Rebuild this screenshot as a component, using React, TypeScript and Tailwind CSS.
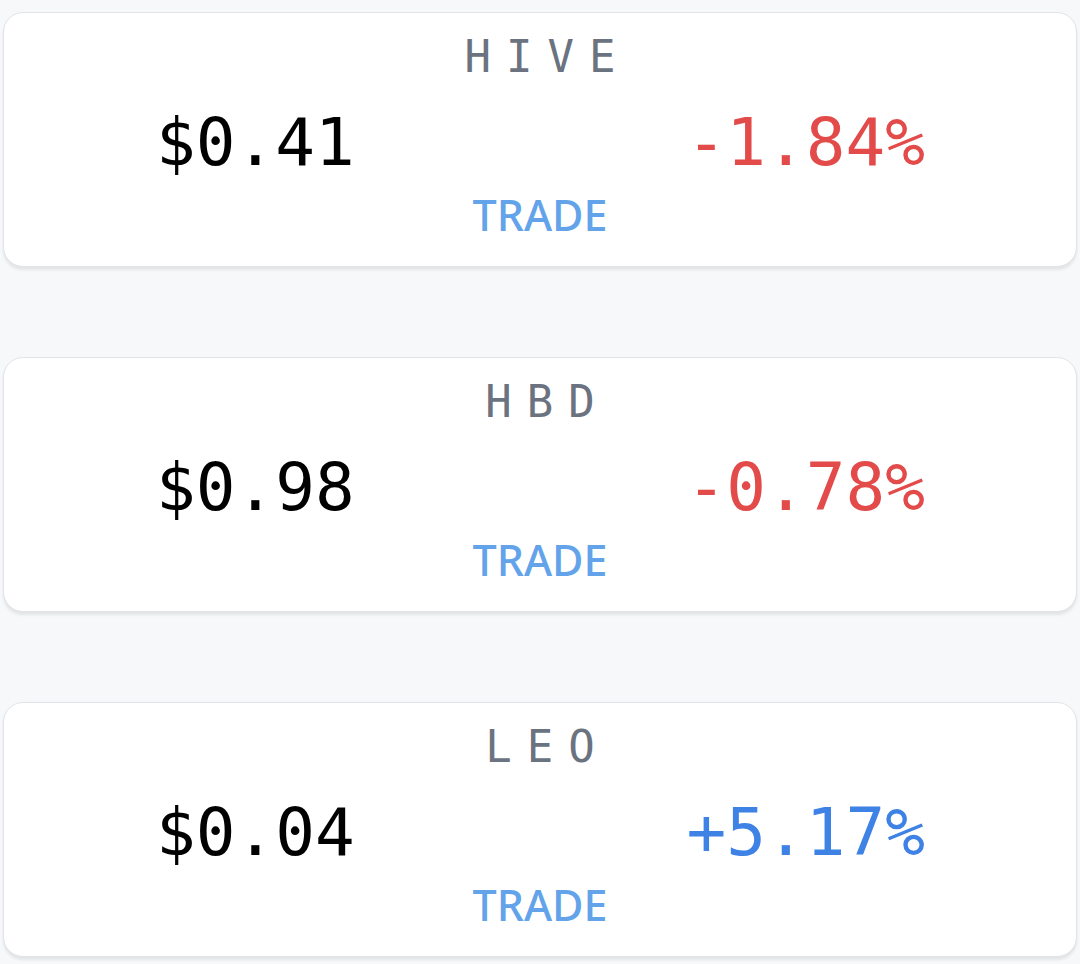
import React from "react";

type Coin = { name: string; price: string; change: string; up: boolean };

const coins: Coin[] = [
  { name: "HIVE", price: "$0.41", change: "-1.84%", up: false },
  { name: "HBD", price: "$0.98", change: "-0.78%", up: false },
  { name: "LEO", price: "$0.04", change: "+5.17%", up: true },
];

function Card({ coin }: { coin: Coin }) {
  return (
    <div className="rounded-[20px] border border-[#e1e3e8] bg-white shadow-[0_3px_3px_rgba(0,0,0,0.08)] pt-[20px] pb-[27px]">
      <div
        className="text-center text-[44px] leading-[48px] tracking-[15px] pl-[15px] text-[#6b7280]"
        style={{ fontFamily: '"DejaVu Sans Mono", monospace' }}
      >
        {coin.name}
      </div>
      <div
        className="mt-[26px] flex justify-between pl-[152px] pr-[151px] text-[66px] leading-[72px]"
        style={{ fontFamily: '"DejaVu Sans Mono", monospace' }}
      >
        <span className="text-black">{coin.price}</span>
        <span className={coin.up ? "text-[#3f82e6]" : "text-[#e34b4b]"}>{coin.change}</span>
      </div>
      <div
        className="mt-[12px] text-center text-[43px] leading-[48px] font-medium text-[#63a3ea]"
        style={{ fontFamily: '"Noto Sans", sans-serif' }}
      >
        TRADE
      </div>
    </div>
  );
}

export default function App() {
  return (
    <div className="min-h-[964px] bg-[#f7f8fa] px-[3px] pt-[12px]">
      <div className="flex flex-col gap-[90px]">
        {coins.map((c) => (
          <Card key={c.name} coin={c} />
        ))}
      </div>
    </div>
  );
}
